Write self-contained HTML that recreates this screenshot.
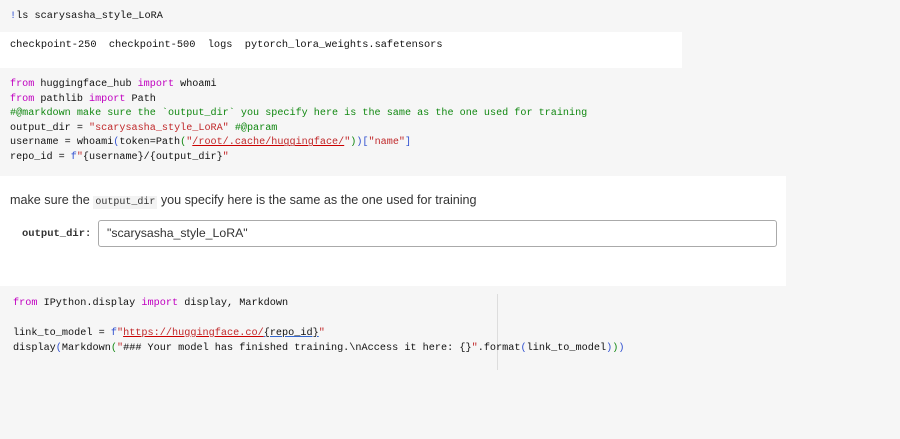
<!DOCTYPE html>
<html><head><style>
body{margin:0;width:900px;height:439px;background:#f6f6f6;position:relative;overflow:hidden;font-family:"Liberation Mono",monospace;}
.c{position:absolute;white-space:pre;font-size:10px;color:#111;}
.k{color:#c000c0}.g{color:#118811}.s{color:#c0282a}.b{color:#3050d0}
.w{position:absolute;background:#fff}
</style></head><body>
<div class="c" style="left:10px;top:10px;line-height:14px;font-size:10.2px"><span class="b">!</span>ls scarysasha_style_LoRA</div>
<div class="w" style="left:0;top:32px;width:682px;height:36px"></div>
<div class="c" style="left:10px;top:38px;font-size:10.3px;line-height:14px">checkpoint-250  checkpoint-500  logs  pytorch_lora_weights.safetensors</div>
<div class="c" style="left:10px;top:78px;line-height:14.6px;font-size:10.15px"><span class="k">from</span> huggingface_hub <span class="k">import</span> whoami
<span class="k">from</span> pathlib <span class="k">import</span> Path
<span class="g">#@markdown make sure the `output_dir` you specify here is the same as the one used for training</span>
output_dir = <span class="s">"scarysasha_style_LoRA"</span> <span class="g">#@param</span>
username = whoami<span class="b">(</span>token=Path<span class="g">(</span><span class="s">"<u style="text-decoration-color:#c00">/root/.cache/huggingface/</u>"</span><span class="g">)</span><span class="b">)[</span><span class="s">"name"</span><span class="b">]</span>
repo_id = <span class="b">f</span><span class="s">"</span>{username}/{output_dir}<span class="s">"</span></div>
<div class="w" style="left:0;top:176px;width:786px;height:110px"></div>
<div style="position:absolute;left:10px;top:193px;font-family:'Liberation Sans',sans-serif;font-size:12.6px;color:#333;white-space:pre">make sure the <span style="font-family:'Liberation Mono',monospace;font-size:10px;background:#f3f3f3;padding:1px 2px">output_dir</span> you specify here is the same as the one used for training</div>
<div style="position:absolute;left:22px;top:228px;font-size:10.5px;font-weight:bold;color:#333">output_dir:</div>
<div style="position:absolute;left:98px;top:220px;width:679px;height:27px;border:1px solid #aaa;border-radius:3px;box-sizing:border-box;font-family:'Liberation Sans',sans-serif;font-size:12.3px;color:#333;line-height:25px;padding-left:8px">"scarysasha_style_LoRA"</div>
<div style="position:absolute;left:497px;top:294px;width:1px;height:76px;background:#ddd"></div>
<div class="c" style="left:13px;top:296px;line-height:15px;font-size:10.2px"><span class="k">from</span> IPython.display <span class="k">import</span> display, Markdown

link_to_model = <span class="b">f</span><span class="s">"<u style="text-decoration-color:#c00">https://huggingface.co/</u></span><u style="text-decoration-color:#36c">{repo_id}</u><span class="s">"</span>
display<span class="b">(</span>Markdown<span class="g">(</span><span class="s">"</span>### Your model has finished training.\nAccess it here: {}<span class="s">"</span>.format<span class="b">(</span>link_to_model<span class="b">)</span><span class="g">)</span><span class="b">)</span></div>
</body></html>
